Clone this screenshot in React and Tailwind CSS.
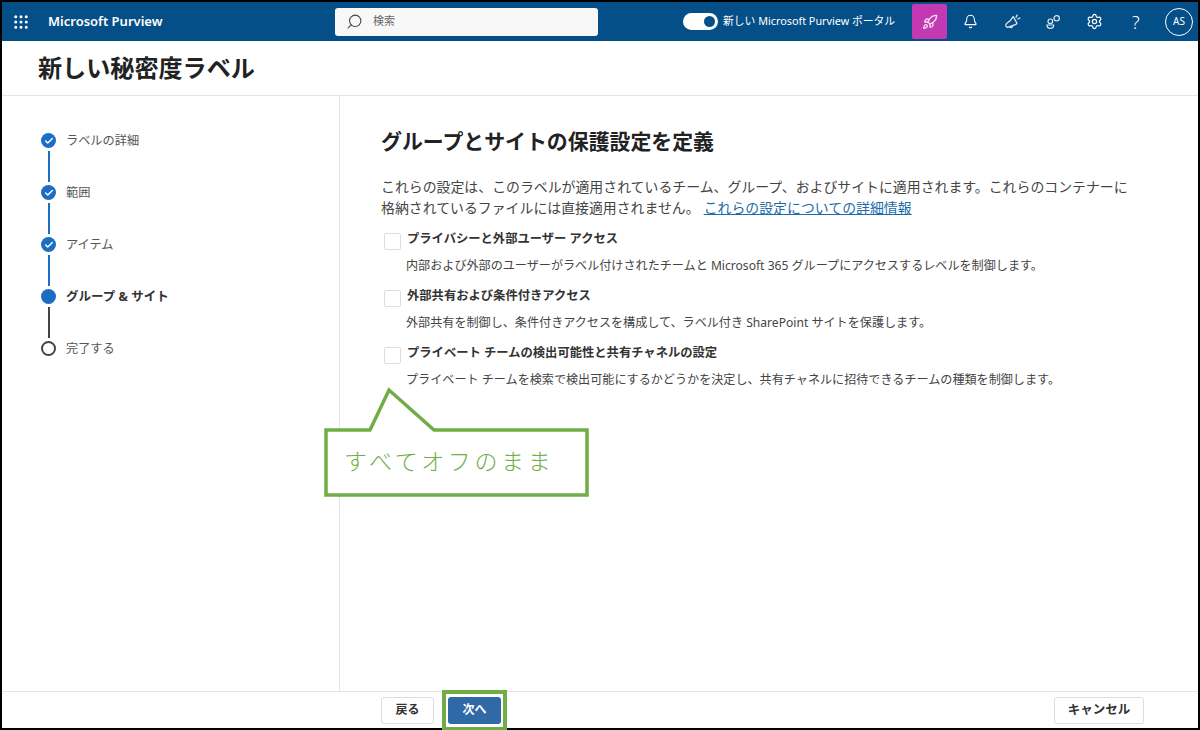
import { Bell, Settings, Search, Check, Rocket, Grip } from "lucide-react";

const FONT = "font-['Noto_Sans','Noto_Sans_CJK_JP',sans-serif]";

const STEPS = [
  { label: "ラベルの詳細", state: "done" },
  { label: "範囲", state: "done" },
  { label: "アイテム", state: "done" },
  { label: "グループ & サイト", state: "current" },
  { label: "完了する", state: "todo" },
];

const OPTIONS = [
  {
    title: "プライバシーと外部ユーザー アクセス",
    text: "内部および外部のユーザーがラベル付けされたチームと Microsoft 365 グループにアクセスするレベルを制御します。",
  },
  {
    title: "外部共有および条件付きアクセス",
    text: "外部共有を制御し、条件付きアクセスを構成して、ラベル付き SharePoint サイトを保護します。",
  },
  {
    title: "プライベート チームの検出可能性と共有チャネルの設定",
    text: "プライベート チームを検索で検出可能にするかどうかを決定し、共有チャネルに招待できるチームの種類を制御します。",
  },
];

// tilted megaphone with little spark lines
function AnnounceIcon({ className }) {
  return (
    <svg className={className} viewBox="0 0 24 24" fill="none" stroke="currentColor" strokeWidth="1.8" strokeLinecap="round" strokeLinejoin="round">
      <path d="M13 5 L18 14 C18.5 15.5 17.5 16 16 16.5 L6 20 C4 20.5 3 19 2.5 18 C2 16.5 3 15.5 4 14.5 C8 12 11 9 13 5 Z" />
      <path d="M8 19 C9 21.5 12 21 12.5 18" />
      <path d="M17 6 L18.5 3 M19.5 8.5 L22.5 7" />
    </svg>
  );
}

// person with a second head behind it
function PeopleIcon({ className }) {
  return (
    <svg className={className} viewBox="0 0 24 24" fill="none" stroke="currentColor" strokeWidth="1.8" strokeLinecap="round">
      <circle cx="17.5" cy="6.5" r="4" />
      <circle cx="8" cy="11" r="3.5" />
      <path d="M3 16.5 H13 C13 20 10.5 21.5 8 21.5 C5.5 21.5 3 20 3 16.5 Z" />
    </svg>
  );
}

function StepDot({ state }) {
  if (state === "done") {
    return (
      <div className="w-[15px] h-[15px] rounded-full bg-[#1b6ec2] flex items-center justify-center">
        <Check className="w-[10px] h-[10px] text-white" strokeWidth={3.5} />
      </div>
    );
  }
  if (state === "current") return <div className="w-[15px] h-[15px] rounded-full bg-[#1b6ec2]" />;
  return <div className="w-[15px] h-[15px] rounded-full border-2 border-[#444] bg-white" />;
}

function Stepper() {
  return (
    <div className="flex flex-col pl-[39px] pt-[37px]">
      {STEPS.map((step, i) => (
        <div key={step.label} className="flex flex-col">
          <div className="flex items-center gap-[10px] h-[15px]">
            <StepDot state={step.state} />
            <span className={`pt-[1px] ${step.state === "current" ? "text-[12.5px] font-bold text-[#333]" : "text-[12.2px] text-[#555]"}`}>{step.label}</span>
          </div>
          {i < STEPS.length - 1 && (
            <div className={`w-[2px] h-[31px] ml-[6.5px] my-[3px] ${i < 3 ? "bg-[#1b6ec2]" : "bg-[#444]"}`} />
          )}
        </div>
      ))}
    </div>
  );
}

export default function App() {
  return (
    <div className={`${FONT} relative w-[1200px] h-[730px] flex flex-col bg-white border-2 border-black`}>
      {/* top bar */}
      <header className="h-[39px] shrink-0 flex items-center bg-[#054f89] text-white">
        <Grip className="w-[18px] h-[18px] ml-[10px]" strokeWidth={2} />
        <span className="ml-[18px] text-[13px] font-semibold w-[287px]">Microsoft Purview</span>
        <div className="w-[263px] h-[28px] bg-[#f8f8f8] rounded-[3px] flex items-center pl-[11px] gap-[10px] text-[#666]">
          <Search className="w-[17px] h-[17px] -scale-x-100 text-[#444]" strokeWidth={1.5} />
          <span className="text-[11px]">検索</span>
        </div>
        <div className="ml-[85px] w-[35px] h-[17px] rounded-full bg-white flex items-center justify-end pr-[3px]">
          <div className="w-[11px] h-[11px] rounded-full bg-[#054f89]" />
        </div>
        <span className="ml-[5px] text-[10.8px] w-[189px] whitespace-nowrap">新しい Microsoft Purview ポータル</span>
        <div className="w-[35px] h-[35px] rounded-[2px] bg-[#c239b3] flex items-center justify-center">
          <Rocket className="w-[16px] h-[16px] text-[#f6dff3]" strokeWidth={2} />
        </div>
        <Bell className="ml-[16px] w-[15px] h-[15px]" strokeWidth={1.7} />
        <AnnounceIcon className="ml-[26px] w-[17px] h-[17px] text-[#dfe9f2]" />
        <PeopleIcon className="ml-[24px] w-[16px] h-[16px] text-[#dfe9f2]" />
        <Settings className="ml-[25px] w-[17px] h-[17px]" strokeWidth={1.7} />
        <span className="ml-[29px] w-[10px] text-[18px] font-light leading-none">?</span>
        <div className="ml-[23px] w-[28px] h-[28px] rounded-full border border-white flex items-center justify-center text-[10px]">AS</div>
      </header>

      {/* page title */}
      <div className="h-[55px] shrink-0 pl-[36px] flex items-center border-b border-[#e4e4e4]">
        <h1 className="text-[24.1px] font-bold text-[#222]">新しい秘密度ラベル</h1>
      </div>

      <div className="flex flex-1 min-h-0">
        <aside className="w-[338px] shrink-0 border-r border-[#e4e4e4]">
          <Stepper />
        </aside>
        <main className="flex-1 pl-[41px] pt-[30px] text-[#333]">
          <h2 className="text-[20.9px] leading-[30px] font-bold text-[#222] whitespace-nowrap">グループとサイトの保護設定を定義</h2>
          <p className="mt-[20px] w-[770px] text-[13.9px] leading-[21px] text-[#444]">
            これらの設定は、このラベルが適用されているチーム、グループ、およびサイトに適用されます。これらのコンテナーに
            <br />
            格納されているファイルには直接適用されません。
            <a className="ml-[4px] text-[#1b6ca8] underline">これらの設定についての詳細情報</a>
          </p>
          <div className="mt-[12px] flex flex-col gap-[12px]">
            {OPTIONS.map((opt) => (
              <div key={opt.title} className="flex gap-[6px]">
                <div className="w-[17px] h-[17px] mt-[3px] ml-[3px] rounded-[2px] border border-[#ddd] bg-white shrink-0" />
                <div className="flex flex-col gap-[9px]">
                  <span className="text-[12.3px] leading-[18px] font-bold text-[#333] whitespace-nowrap">{opt.title}</span>
                  <span className="-ml-[1px] text-[12.1px] leading-[18px] text-[#444] whitespace-nowrap">{opt.text}</span>
                </div>
              </div>
            ))}
          </div>
        </main>
      </div>

      {/* footer */}
      <footer className="h-[37px] shrink-0 flex items-center border-t border-[#e4e4e4]">
        <button className="ml-[379px] w-[53px] h-[27px] rounded-[3px] border border-[#ddd] bg-white text-[12px] font-bold text-[#333]">戻る</button>
        <div className="ml-[8px] border-[4px] border-[#70ad47] h-[41px] w-[65px] shrink-0 flex items-center justify-center">
          <button className="w-[53px] h-[27px] rounded-[3px] bg-[#2f69a6] text-[12px] font-bold text-white">次へ</button>
        </div>
        <button className="ml-[547px] w-[90px] h-[27px] rounded-[3px] border border-[#ddd] bg-white text-[12.5px] font-bold text-[#333]">キャンセル</button>
      </footer>

      {/* callout over the content */}
      <div className="absolute left-[318px] top-[379px] w-[270px] h-[118px]">
        <svg className="absolute inset-0" width="270" height="118" viewBox="0 0 270 118">
          <path d="M6 49 H50 L69 9 L114 49 H267 V114 H6 Z" fill="white" stroke="#70ad47" strokeWidth="3.5" />
        </svg>
        <span className="absolute left-[24px] top-[62px] text-[23px] leading-[36px] font-light tracking-[3.6px] text-[#70ad47] whitespace-nowrap">すべてオフのまま</span>
      </div>
    </div>
  );
}
